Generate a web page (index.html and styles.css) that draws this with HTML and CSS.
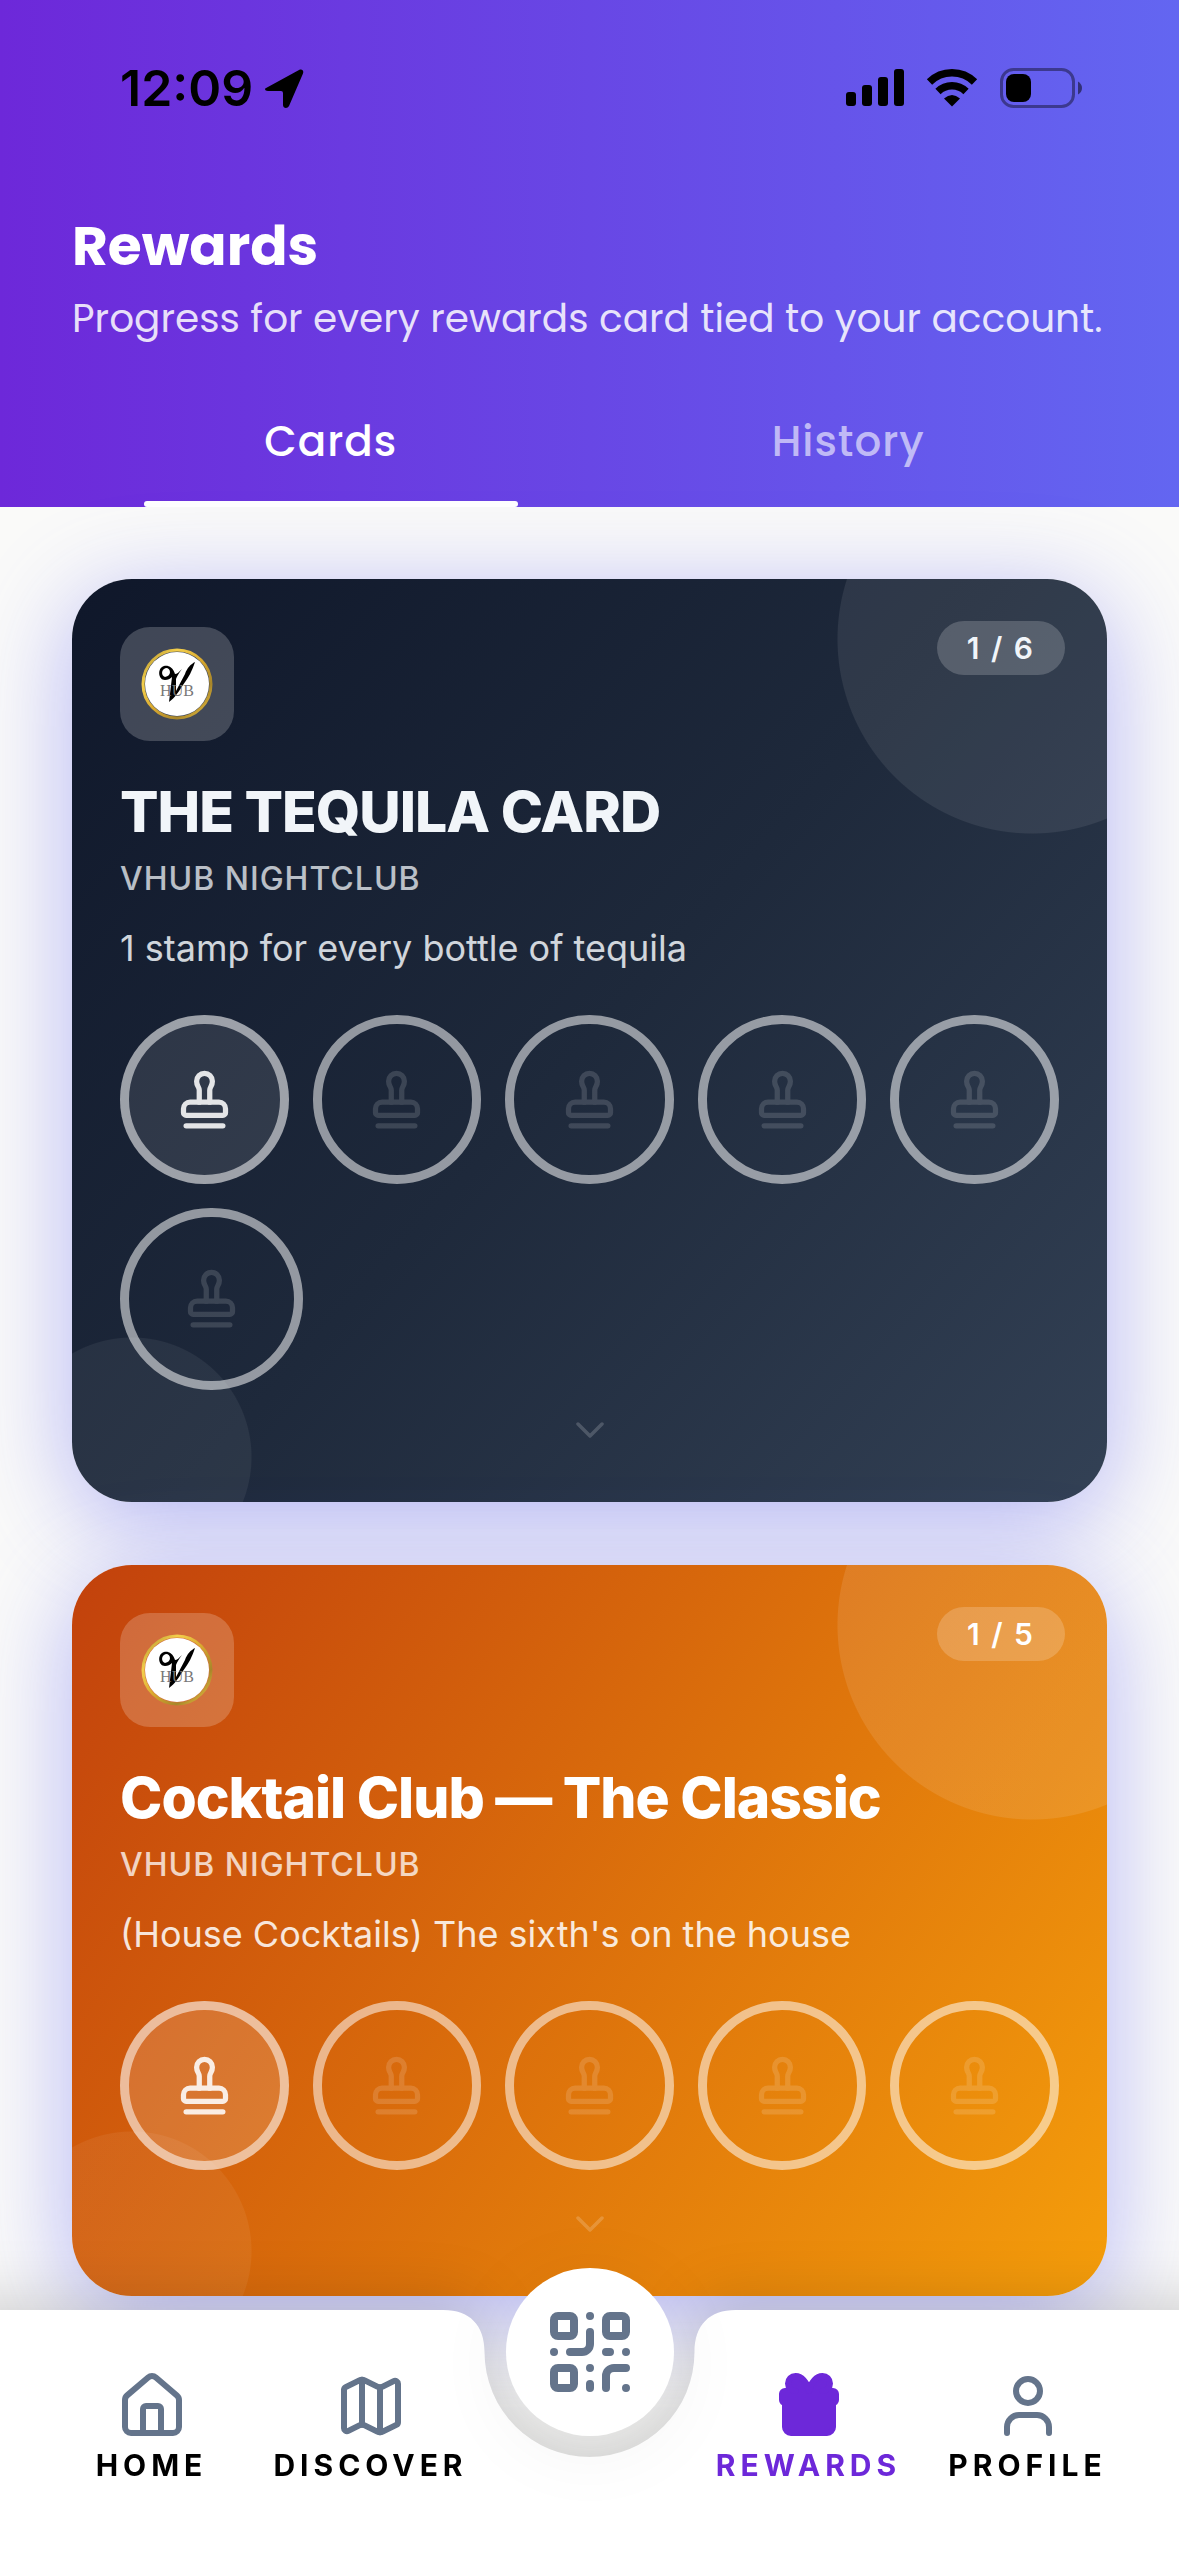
FILE: index.html
```html
<!DOCTYPE html>
<html lang="en">
<head>
<meta charset="utf-8">
<meta name="viewport" content="width=device-width, initial-scale=1">
<title>Rewards</title>
<link rel="stylesheet" href="styles.css">
</head>
<body>
<svg class="sprite" aria-hidden="true">
  <defs>
    <linearGradient id="gold" x1="0" y1="0" x2="1" y2="1">
      <stop offset="0" stop-color="#a98a28"/>
      <stop offset=".25" stop-color="#f4cf4c"/>
      <stop offset=".5" stop-color="#d9a92f"/>
      <stop offset=".75" stop-color="#a8862a"/>
      <stop offset="1" stop-color="#f4c842"/>
    </linearGradient>
  </defs>
  <symbol id="stamp" viewBox="0 0 24 24">
    <path d="M14 13V8.500C14 7 15 7 15 5a3 3 0 0 0-6 0c0 2 1 2 1 3.500V13"/>
    <path d="M20 15.500a2.500 2.500 0 0 0-2.500-2.500h-11A2.500 2.500 0 0 0 4 15.500V17a1 1 0 0 0 1 1h14a1 1 0 0 0 1-1z"/>
    <path d="M5 22h14"/>
  </symbol>
  <symbol id="chevron" viewBox="0 0 24 24"><path d="m6 9 6 6 6-6"/></symbol>
  <symbol id="emblem" viewBox="0 0 72 72">
    <circle cx="36" cy="36" r="34" fill="none" stroke="url(#gold)" stroke-width="3"/>
    <circle cx="36" cy="36" r="32" fill="#fff"/>
    <path d="M54 14C50 16 46 20 44 26L35 43V31C36 28 38 25 41 21C38 24 36 26 34 26C32 19 27 17 23 18C16 20 17 32 24 32C27 32 29 31 31 29L28 54C34 50 38 43 42 37C48 29 51 23 54 14ZM24 29C20 28 20 21 25 20C30 20 31 28 24 29Z" fill="#000"/>
  </symbol>
</svg>

<header class="header">
  <div class="status">
    <div class="status-left">
      <span class="time">12:09</span>
      <svg class="locate" viewBox="0 0 39 39" aria-hidden="true"><path d="M2 18.500 34 1c3-1.500 5 .5 4 3.500L24 37c-1.500 3-6 2.500-6-1V24q0-2-2-2H3c-3.500 0-4-2.500-1-3.500z"/></svg>
    </div>
    <div class="status-right">
      <svg class="signal" viewBox="0 0 58 38" aria-hidden="true">
        <rect x="0" y="23" width="10" height="14" rx="3"/><rect x="16" y="16" width="10" height="21" rx="3"/><rect x="32" y="8" width="10" height="29" rx="3"/><rect x="48" y="0" width="10" height="37" rx="3"/>
      </svg>
      <svg class="wifi" viewBox="0 0 52 38" aria-hidden="true">
        <path d="M3.500 13a32 32 0 0 1 45 0M12 22.500a20 20 0 0 1 28 0" fill="none" stroke="#000" stroke-width="7.500"/>
        <path d="M18 29.500q8-7 16 0L26 37.500z"/>
      </svg>
      <svg class="battery" viewBox="0 0 83 40" aria-hidden="true">
        <rect x="1.500" y="1.500" width="72" height="37" rx="12" fill="none" stroke="#000" stroke-opacity=".4" stroke-width="3"/>
        <rect x="6" y="6" width="25" height="28" rx="8"/>
        <path d="M78 13.500q4 2.500 4 6.500t-4 6.500z" fill-opacity=".5"/>
      </svg>
    </div>
  </div>
  <div class="intro">
    <h1>Rewards</h1>
    <p>Progress for every rewards card tied to your account.</p>
  </div>
  <div class="tabs" role="tablist">
    <button class="tab tab-active" role="tab" aria-selected="true">Cards</button>
    <button class="tab" role="tab" aria-selected="false">History</button>
  </div>
</header>

<main class="cards">
  <article class="card card-dark">
    <span class="count">1 / 6</span>
    <div class="logo">
      <svg viewBox="0 0 72 72"><use href="#emblem"/><text class="logo-word" x="36" y="48">HUB</text></svg>
    </div>
    <h2>THE TEQUILA CARD</h2>
    <p class="venue">VHUB NIGHTCLUB</p>
    <p class="terms">1 stamp for every bottle of tequila</p>
    <div class="stamps">
      <div class="stamp stamped"><svg><use href="#stamp"/></svg></div>
      <div class="stamp"><svg><use href="#stamp"/></svg></div>
      <div class="stamp"><svg><use href="#stamp"/></svg></div>
      <div class="stamp"><svg><use href="#stamp"/></svg></div>
      <div class="stamp"><svg><use href="#stamp"/></svg></div>
      <div class="stamp stamp-wrapped"><svg><use href="#stamp"/></svg></div>
    </div>
    <button class="expand" aria-label="Show details"><svg><use href="#chevron"/></svg></button>
  </article>

  <article class="card card-orange">
    <span class="count">1 / 5</span>
    <div class="logo">
      <svg viewBox="0 0 72 72"><use href="#emblem"/><text class="logo-word" x="36" y="48">HUB</text></svg>
    </div>
    <h2>Cocktail Club — The Classic</h2>
    <p class="venue">VHUB NIGHTCLUB</p>
    <p class="terms">(House Cocktails) The sixth's on the house</p>
    <div class="stamps">
      <div class="stamp stamped"><svg><use href="#stamp"/></svg></div>
      <div class="stamp"><svg><use href="#stamp"/></svg></div>
      <div class="stamp"><svg><use href="#stamp"/></svg></div>
      <div class="stamp"><svg><use href="#stamp"/></svg></div>
      <div class="stamp"><svg><use href="#stamp"/></svg></div>
    </div>
    <button class="expand" aria-label="Show details"><svg><use href="#chevron"/></svg></button>
  </article>
</main>

<nav class="nav" aria-label="Main">
  <svg class="nav-shape" aria-hidden="true">
    <svg x="50%" overflow="visible"><path d="M-3000 0H-146C-120 0-105 15-105 42A105 105 0 0 0 105 42C105 15 120 0 146 0H3000V300H-3000z"/></svg>
  </svg>
  <div class="nav-items">
    <a class="nav-item" href="#home">
      <svg viewBox="0 0 24 24"><path d="M15 21v-8a1 1 0 0 0-1-1h-4a1 1 0 0 0-1 1v8"/><path d="M3 10a2 2 0 0 1 .709-1.528l7-5.999a2 2 0 0 1 2.582 0l7 5.999A2 2 0 0 1 21 10v9a2 2 0 0 1-2 2H5a2 2 0 0 1-2-2z"/></svg>
      <span>HOME</span>
    </a>
    <a class="nav-item" href="#discover">
      <svg viewBox="0 0 24 24"><path d="M14.106 5.553a2 2 0 0 0 1.788 0l3.659-1.830A1 1 0 0 1 21 4.619v12.764a1 1 0 0 1-.553.894l-4.553 2.277a2 2 0 0 1-1.788 0l-4.212-2.106a2 2 0 0 0-1.788 0l-3.659 1.830A1 1 0 0 1 3 19.381V6.618a1 1 0 0 1 .553-.894l4.553-2.277a2 2 0 0 1 1.788 0z"/><path d="M15 5.764v15"/><path d="M9 3.236v15"/></svg>
      <span>DISCOVER</span>
    </a>
    <button class="scan" aria-label="Scan code">
      <svg viewBox="0 0 24 24"><rect width="5" height="5" x="3" y="3" rx="1"/><rect width="5" height="5" x="16" y="3" rx="1"/><rect width="5" height="5" x="3" y="16" rx="1"/><path d="M21 16h-3a2 2 0 0 0-2 2v3M21 21v.01M12 7v3a2 2 0 0 1-2 2H7M3 12h.01M12 3h.01M12 16v.01M16 12h1M21 12v.01M12 21v-1"/></svg>
    </button>
    <a class="nav-item nav-current" href="#rewards" aria-current="page">
      <svg viewBox="0 0 24 24"><rect x="3" y="7" width="18" height="4" rx="1"/><path d="M12 7v14"/><path d="M20 11v8a2 2 0 0 1-2 2H6a2 2 0 0 1-2-2v-8"/><path d="M7.500 7a1 1 0 0 1 0-5A4.800 8 0 0 1 12 7a4.800 8 0 0 1 4.500-5 1 1 0 0 1 0 5"/></svg>
      <span>REWARDS</span>
    </a>
    <a class="nav-item" href="#profile">
      <svg viewBox="0 0 24 24"><path d="M19 21v-2a4 4 0 0 0-4-4H9a4 4 0 0 0-4 4v2"/><circle cx="12" cy="7" r="4"/></svg>
      <span>PROFILE</span>
    </a>
  </div>
</nav>
</body>
</html>
```
FILE: styles.css
```css
* { box-sizing: border-box; margin: 0; padding: 0; }

body {
  background: #fafaf9;
  font-family: Inter, "Liberation Sans", sans-serif;
  color: #000;
}

button { border: 0; background: none; font: inherit; color: inherit; cursor: pointer; }
a { color: inherit; text-decoration: none; }
svg { display: block; }
.sprite { position: absolute; width: 0; height: 0; }

/* Header */
.header {
  position: relative;
  padding: 58px 72px 0;
  background: linear-gradient(90deg, #6d28d9, #6366f1);
  color: #fff;
}

.status { display: flex; justify-content: space-between; align-items: center; height: 60px; padding: 0 24px 0 48px; color: #000; }
.status-left { display: flex; align-items: center; gap: 12px; }
.time { font-size: 50px; line-height: 60px; font-weight: 600; }
.locate { width: 39px; height: 39px; }
.status-right { display: flex; align-items: center; gap: 22px; }
.signal { width: 58px; height: 38px; }
.wifi { width: 52px; height: 38px; }
.battery { width: 83px; height: 40px; }

.intro { padding-top: 96px; font-family: Poppins, Inter, sans-serif; }
.intro h1 { font-size: 55px; line-height: 64px; font-weight: 700; }
.intro p { margin-top: 18px; font-size: 39px; line-height: 46px; color: rgba(255, 255, 255, .85); }

.tabs { display: grid; grid-template-columns: 1fr 1fr; margin-top: 38px; font-family: Poppins, Inter, sans-serif; }
.tab { position: relative; padding: 38px 0 41px; font-size: 42px; line-height: 48px; font-weight: 500; letter-spacing: 1px; color: rgba(255, 255, 255, .6); }
.tab-active { color: #fff; }
.tab-active::after { content: ""; position: absolute; inset: auto 72px 0; height: 6px; border-radius: 3px; background: #fff; }

/* Reward cards */
.cards { display: flex; flex-direction: column; gap: 63px; padding: 72px 72px 246px; }

.card {
  position: relative;
  padding: 48px;
  border-radius: 60px;
  box-shadow: 0 18px 96px rgba(99, 102, 241, .47);
  color: #fff;
}
.card::before {
  content: "";
  position: absolute;
  inset: 0;
  border-radius: inherit;
}
.card > * { position: relative; }
.card-dark { --fill: .1; color: #f1f5f9; }
.card-orange { --fill: .15; }
.card-dark::before {
  background:
    radial-gradient(circle 195px at calc(100% - 75px) 60px, rgba(255, 255, 255, .08) 194px, transparent 195px),
    radial-gradient(circle 120px at 60px calc(100% - 45px), rgba(255, 255, 255, .06) 119px, transparent 120px),
    linear-gradient(132deg, #0f172a, #1e293b 50%, #334155);
}
.card-orange::before {
  background:
    radial-gradient(circle 195px at calc(100% - 75px) 60px, rgba(255, 255, 255, .1) 194px, transparent 195px),
    radial-gradient(circle 120px at 60px calc(100% - 45px), rgba(255, 255, 255, .06) 119px, transparent 120px),
    linear-gradient(125deg, #c2410c, #f59e0b);
}

.card > .count {
  position: absolute;
  top: 42px;
  right: 42px;
  padding: 0 30px;
  border-radius: 27px;
  background: rgba(255, 255, 255, .19);
  font-size: 30px;
  line-height: 54px;
  font-weight: 600;
  letter-spacing: 2px;
}

.logo { display: grid; place-items: center; width: 114px; height: 114px; border-radius: 30px; background: rgba(255, 255, 255, .2); }
.logo svg { width: 72px; height: 72px; }
.logo-word { font-family: "Liberation Serif", serif; font-size: 16px; text-anchor: middle; fill: #777; }

.card h2 { margin-top: 38px; font-size: 57px; line-height: 66px; font-weight: 800; letter-spacing: -1px; }
.venue { margin-top: 14px; font-size: 32px; line-height: 40px; font-weight: 500; letter-spacing: 1px; opacity: .75; }
.terms { margin-top: 27px; font-size: 36px; line-height: 44px; opacity: .85; }

.stamps { display: grid; grid-template-columns: repeat(5, minmax(0, 1fr)); gap: 24px; margin-top: 45px; }
.stamp { display: grid; place-items: center; aspect-ratio: 1; border: 9px solid rgba(255, 255, 255, .53); border-radius: 50%; }
.stamp svg { width: 63px; height: 63px; fill: none; stroke: #fff; stroke-width: 2; stroke-linecap: round; stroke-linejoin: round; opacity: .14; }
.stamped { background: rgba(255, 255, 255, var(--fill)); }
.stamped svg { opacity: .87; }
/* A stamp that starts a new row is drawn larger than its slot */
.stamp-wrapped { width: calc(100% + 14px); margin-bottom: -14px; }

.expand { display: block; width: 48px; height: 48px; margin: 30px auto 0; }
.expand svg { width: 48px; height: 48px; fill: none; stroke: #fff; stroke-width: 1.75; stroke-linecap: round; stroke-linejoin: round; opacity: .18; }

/* Bottom navigation */
.nav { position: fixed; inset: auto 0 0; height: 246px; }
.nav-shape { position: absolute; inset: 0; width: 100%; height: 100%; overflow: visible; fill: #fff; filter: drop-shadow(0 -9px 30px rgba(0, 0, 0, .16)); }
.nav-items { position: relative; display: grid; grid-template-columns: repeat(5, 1fr); align-items: start; padding: 0 42px; }
.nav-item { display: flex; flex-direction: column; align-items: center; gap: 5px; padding-top: 60px; }
.nav-item svg { width: 72px; height: 72px; fill: none; stroke: #64748b; stroke-width: 2; stroke-linecap: round; stroke-linejoin: round; }
.nav-item span { font-size: 30px; line-height: 36px; font-weight: 700; letter-spacing: 5px; }
.nav-current { color: #6d28d9; }
.nav-item.nav-current svg { fill: #6d28d9; stroke: #6d28d9; }

.scan {
  display: grid;
  place-items: center;
  justify-self: center;
  width: 168px;
  height: 168px;
  margin-top: -42px;
  border-radius: 50%;
  background: #fff;
  box-shadow: 0 12px 84px rgba(0, 0, 0, .06);
}
.scan svg { width: 96px; height: 96px; fill: none; stroke: #64748b; stroke-width: 2; stroke-linecap: round; stroke-linejoin: round; }
```
